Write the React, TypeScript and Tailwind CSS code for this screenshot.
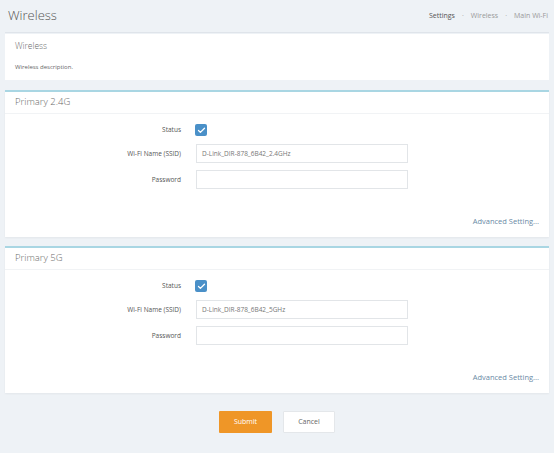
import { Check } from "lucide-react";

interface BandProps {
  title: string;
  ssid: string;
  className?: string;
}

const BandCard = ({ title, ssid, className }: BandProps) => {
  return (
    <div className={`bg-white border-t-2 border-[#a9d6e3] h-[147px] flex flex-col shadow-[0_1px_2px_rgba(0,0,0,0.05)] ${className ?? ""}`}>
      <div className="h-[22px] flex items-center px-[10px] border-b border-[#f1f3f5]">
        <span className="text-[9.5px] text-[#6a6a6a] font-light">{title}</span>
      </div>
      {/* formulário */}
      <div className="flex flex-col mt-[7px]">
        <div className="flex items-center h-[18px]">
          <div className="w-[176px] text-right text-[6.5px] font-medium text-[#555]">Status</div>
          <div className="ml-[14px] w-[12px] h-[12px] rounded-[2px] bg-[#4a90c8] flex items-center justify-center">
            <Check className="w-[9px] h-[9px] text-white" strokeWidth={3.5} />
          </div>
        </div>
        <div className="flex items-center h-[19px] mt-[5px]">
          <div className="w-[176px] text-right text-[6.5px] font-medium text-[#555]">Wi-Fi Name (SSID)</div>
          <div className="ml-[15px] w-[212px] h-[19px] border border-[#e2e5e8] flex items-center px-[5px] text-[6.5px] text-[#777]">
            {ssid}
          </div>
        </div>
        <div className="flex items-center h-[19px] mt-[7px]">
          <div className="w-[176px] text-right text-[6.5px] font-medium text-[#555]">Password</div>
          <div className="ml-[15px] w-[212px] h-[19px] border border-[#e2e5e8]" />
        </div>
      </div>
      <div className="flex justify-end pr-[10px] mt-[27px]">
        <span className="text-[7.5px] text-[#6a8aa5]">Advanced Setting...</span>
      </div>
    </div>
  );
};

const App = () => {
  return (
    <div className="w-full h-[453px] bg-[#eef2f6] px-[5px] overflow-hidden" style={{ fontFamily: '"Open Sans", "Liberation Sans", sans-serif' }}>
      <div className="h-[33px] flex items-center justify-between border-b border-[#dfe4ea] pl-[3px]">
        <span className="text-[13px] text-[#555] font-light">Wireless</span>
        <div className="flex items-center gap-[7px] text-[7px] text-[#999] pr-[1px]">
          <span className="text-[#555]">Settings</span>
          <span>·</span>
          <span>Wireless</span>
          <span>·</span>
          <span>Main Wi-Fi</span>
        </div>
      </div>

      <div className="bg-white h-[46px] mt-[1px] px-[10px] flex flex-col">
        <span className="text-[8.5px] text-[#6a6a6a] font-light mt-[6px]">Wireless</span>
        <span className="text-[6px] text-[#666] mt-[10px]">Wireless description.</span>
      </div>

      <BandCard title="Primary 2.4G" ssid="D-Link_DIR-878_6B42_2.4GHz" className="mt-[10px]" />
      <BandCard title="Primary 5G" ssid="D-Link_DIR-878_6B42_5GHz" className="mt-[9px]" />

      <div className="flex justify-center gap-[11px] mt-[18px]">
        <button className="w-[53px] h-[22px] bg-[#ef9627] text-white text-[7px] rounded-[1px]">Submit</button>
        <button className="w-[52px] h-[22px] bg-white border border-[#e4e7ea] text-[#666] text-[7px] rounded-[1px]">Cancel</button>
      </div>
    </div>
  );
};

export default App;
